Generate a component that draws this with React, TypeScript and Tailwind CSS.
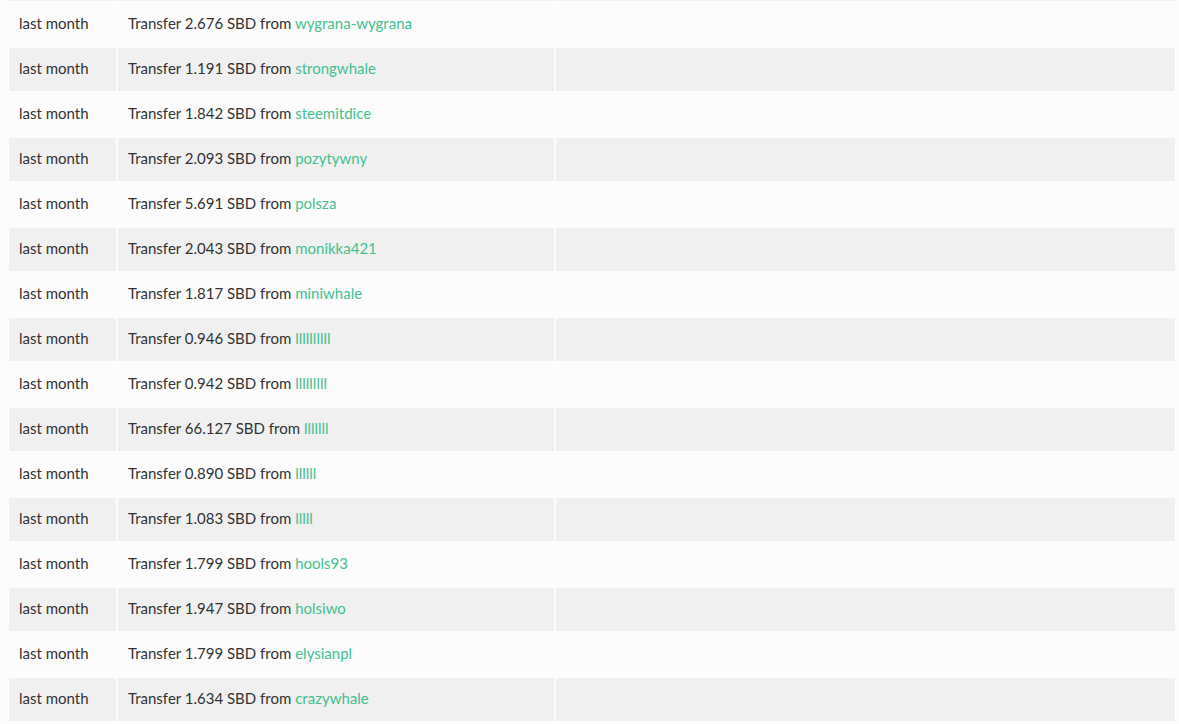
const rows: [string, string][] = [
  ["2.676", "wygrana-wygrana"],
  ["1.191", "strongwhale"],
  ["1.842", "steemitdice"],
  ["2.093", "pozytywny"],
  ["5.691", "polsza"],
  ["2.043", "monikka421"],
  ["1.817", "miniwhale"],
  ["0.946", "llllllllll"],
  ["0.942", "lllllllll"],
  ["66.127", "lllllll"],
  ["0.890", "llllll"],
  ["1.083", "lllll"],
  ["1.799", "hools93"],
  ["1.947", "holsiwo"],
  ["1.799", "elysianpl"],
  ["1.634", "crazywhale"],
]

const App = () => {
  return (
    <div className="h-[724px] w-[1179px] overflow-hidden bg-[#fcfcfc] pl-[7px] pr-[2px] font-['Lato','Open_Sans',sans-serif] text-[15px] text-[#333333]">
      <table className="-mt-[44px] w-full border-separate border-spacing-[2px]">
        <tbody>
          {/* previous row, scrolled mostly out of view */}
          <tr className="bg-[#f0f0f0]">
            <td className="h-[43px] w-[107px]"></td>
            <td className="w-[436px]"></td>
            <td></td>
          </tr>
          {rows.map(([amount, user], i) => (
            <tr key={i} className={i % 2 === 1 ? "bg-[#f0f0f0]" : ""}>
              <td className="h-[43px] w-[107px] px-[10px] pb-[2px] align-middle">last month</td>
              <td className="w-[436px] px-[10px] pb-[2px] align-middle">
                Transfer {amount} SBD from{" "}
                <a className="text-[#45c092]">{user}</a>
              </td>
              <td></td>
            </tr>
          ))}
        </tbody>
      </table>
    </div>
  )
}

export default App
